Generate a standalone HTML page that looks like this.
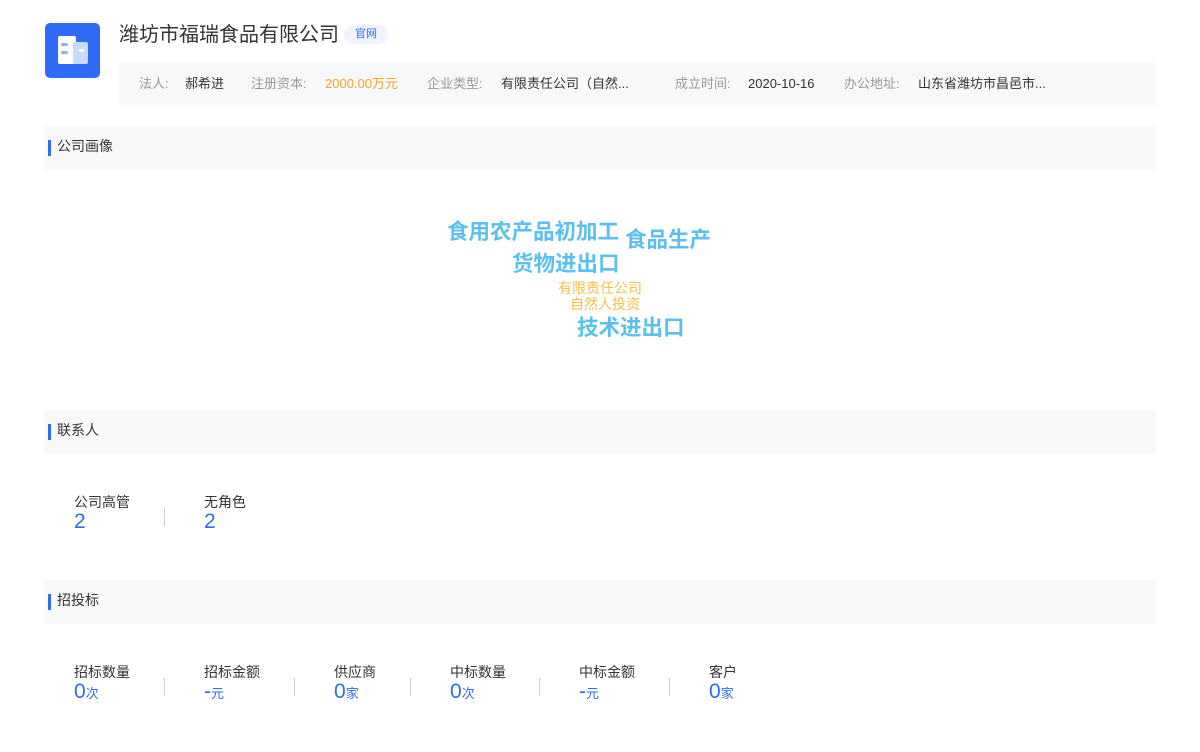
<!DOCTYPE html>
<html><head><meta charset="utf-8"><style>
*{margin:0;padding:0;box-sizing:border-box}
body{width:1200px;height:752px;background:#fff;font-family:"Liberation Sans","Noto Sans CJK SC",sans-serif;color:#333;position:relative;overflow:hidden}
.abs{position:absolute;white-space:nowrap}
.logo{left:45px;top:23px;width:55px;height:55px;background:#2f6bf5;border-radius:5px}
.info{left:119px;top:62px;width:1037px;height:43px;background:#f7f8fa;border-radius:2px;font-size:13px;line-height:43px}
.info .l{color:#999}.info .v{color:#333}
.sec{left:44px;width:1112px;height:44px;background:#f8f8f8}
.sec span{position:absolute;left:4px;top:14px;width:3px;height:16px;background:#2f6bf5}
.sec b{position:absolute;left:13px;top:10px;font-weight:normal;font-size:14px;color:#333}
.lab{font-size:14px;color:#333}
.num{font-size:21px;color:#2f6bf5}
.num small{font-size:13px}
.div{width:1px;height:18px;background:#ccc}
.w{color:#5bc0f0;font-size:21.5px;font-weight:bold}
</style></head><body>
<div class="abs logo">
<svg width="55" height="55" viewBox="0 0 55 55"><rect x="13" y="13" width="18" height="28" rx="2" fill="#fff"/><rect x="28" y="19" width="15" height="22" rx="2" fill="#c7dbfd"/><rect x="16" y="20" width="7" height="3" rx="1.5" fill="#8fb1f8"/><rect x="16" y="28" width="7" height="3" rx="1.5" fill="#8fb1f8"/><rect x="34" y="26" width="5" height="3" rx="1.5" fill="#fff"/></svg>
</div>
<div class="abs" style="left:119px;top:18px;font-size:20px;color:#333">潍坊市福瑞食品有限公司</div>
<div class="abs" style="left:344px;top:25px;width:44px;height:19px;border-radius:10px;background:#eef3fd;color:#2f6bf5;font-size:11px;text-align:center;line-height:19px">官网</div>
<div class="abs info">
<span class="abs l" style="left:20px">法人:</span><span class="abs v" style="left:66px">郝希进</span>
<span class="abs l" style="left:132px">注册资本:</span><span class="abs" style="left:206px;color:#f5a623">2000.00万元</span>
<span class="abs l" style="left:308px">企业类型:</span><span class="abs v" style="left:382px">有限责任公司（自然...</span>
<span class="abs l" style="left:556px">成立时间:</span><span class="abs v" style="left:629px">2020-10-16</span>
<span class="abs l" style="left:725px">办公地址:</span><span class="abs v" style="left:799px">山东省潍坊市昌邑市...</span>
</div>
<div class="abs sec" style="top:126px"><span></span><b>公司画像</b></div>
<div class="abs w" style="left:447px;top:215px">食用农产品初加工</div>
<div class="abs w" style="left:625px;top:223px">食品生产</div>
<div class="abs w" style="left:512px;top:247px">货物进出口</div>
<div class="abs" style="left:558px;top:278px;font-size:14px;color:#f5c04a">有限责任公司</div>
<div class="abs" style="left:570px;top:294px;font-size:14px;color:#f5c04a">自然人投资</div>
<div class="abs w" style="left:577px;top:311px">技术进出口</div>

<div class="abs sec" style="top:410px"><span></span><b>联系人</b></div>
<div class="abs lab" style="left:74px;top:492px">公司高管</div><div class="abs num" style="left:74px;top:510px">2</div>
<div class="abs div" style="left:164px;top:508px"></div>
<div class="abs lab" style="left:204px;top:492px">无角色</div><div class="abs num" style="left:204px;top:510px">2</div>

<div class="abs sec" style="top:580px"><span></span><b>招投标</b></div>
<div class="abs lab" style="left:74px;top:662px">招标数量</div><div class="abs num" style="left:74px;top:680px">0<small>次</small></div>
<div class="abs div" style="left:164px;top:678px"></div>
<div class="abs lab" style="left:204px;top:662px">招标金额</div><div class="abs num" style="left:204px;top:680px">-<small>元</small></div>
<div class="abs div" style="left:294px;top:678px"></div>
<div class="abs lab" style="left:334px;top:662px">供应商</div><div class="abs num" style="left:334px;top:680px">0<small>家</small></div>
<div class="abs div" style="left:410px;top:678px"></div>
<div class="abs lab" style="left:450px;top:662px">中标数量</div><div class="abs num" style="left:450px;top:680px">0<small>次</small></div>
<div class="abs div" style="left:539px;top:678px"></div>
<div class="abs lab" style="left:579px;top:662px">中标金额</div><div class="abs num" style="left:579px;top:680px">-<small>元</small></div>
<div class="abs div" style="left:669px;top:678px"></div>
<div class="abs lab" style="left:709px;top:662px">客户</div><div class="abs num" style="left:709px;top:680px">0<small>家</small></div>
</body></html>
